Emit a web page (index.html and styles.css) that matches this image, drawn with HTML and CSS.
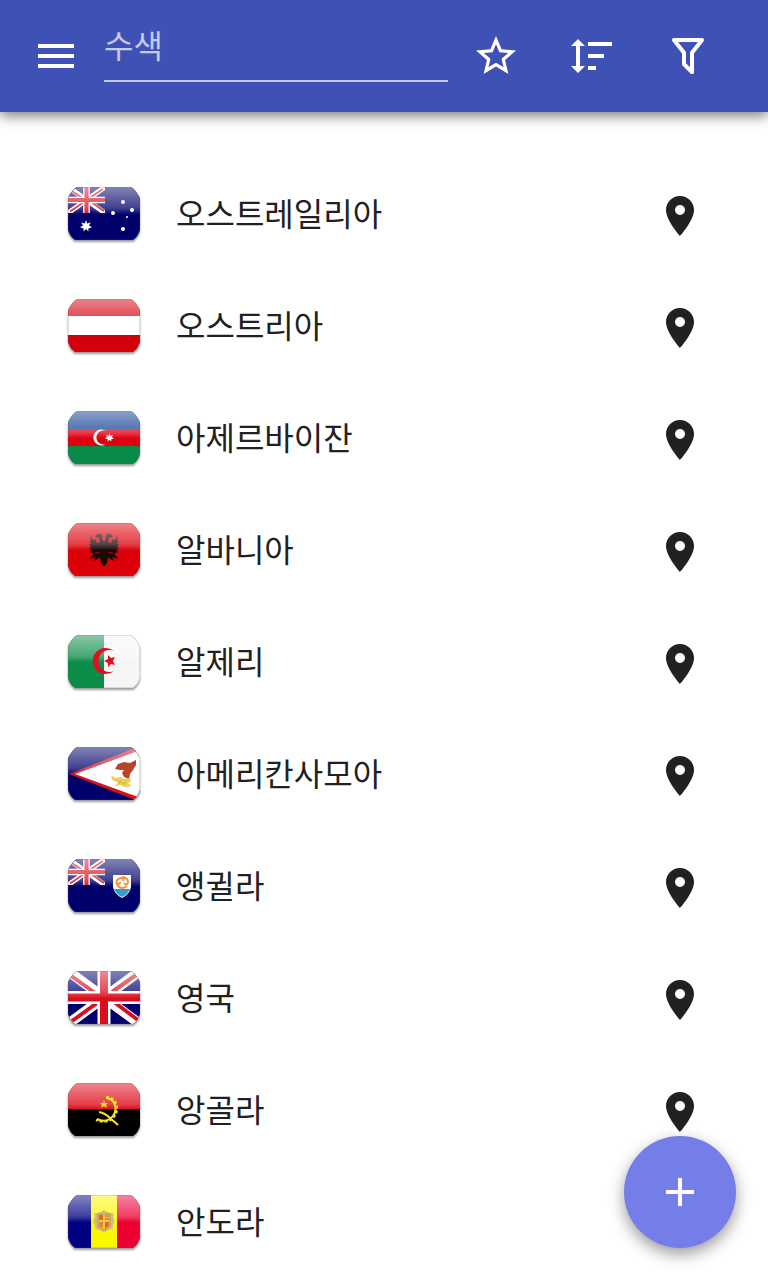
FILE: index.html
```html
<!DOCTYPE html>
<html lang="ko">
<head>
    <meta charset="UTF-8">
    <meta name="viewport" content="width=device-width, initial-scale=1.0">
    <title>국가</title>
    <link rel="stylesheet" href="styles.css">
</head>
<body>
    <!-- shared shapes -->
    <svg class="defs" aria-hidden="true">
        <defs>
            <clipPath id="flag-shape">
                <path d="M9 0H63Q68 3 72 11V43Q70 50 65 53H7Q2 50 0 43V11Q4 3 9 0Z"/>
            </clipPath>
            <linearGradient id="gloss" x1="0" y1="0" x2="0" y2="1">
                <stop offset="0" stop-color="#fff" stop-opacity=".52"/>
                <stop offset=".4" stop-color="#fff" stop-opacity=".25"/>
                <stop offset=".52" stop-color="#fff" stop-opacity="0"/>
            </linearGradient>
            <symbol id="shine" viewBox="0 0 72 53">
                <rect width="72" height="53" fill="url(#gloss)"/>
                <path d="M0 43V11Q4 3 9 0H63Q68 3 72 11V43Q70 50 65 53H7Q2 50 0 43Z" fill="none" stroke="#555" stroke-opacity=".35"/>
            </symbol>
            <symbol id="jack" viewBox="0 0 72 53" preserveAspectRatio="none">
                <rect width="72" height="53" fill="#00006e"/>
                <path d="M0 0L72 53M72 0L0 53" stroke="#fff" stroke-width="10"/>
                <path d="M2 4L27 22M68 4L44 21M4 50L29 32M70 49L46 31" stroke="#d80f1e" stroke-width="4"/>
                <path d="M36 0V53M0 26.5H72" stroke="#fff" stroke-width="13"/>
                <path d="M36 0V53M0 26.5H72" stroke="#d80f1e" stroke-width="8"/>
            </symbol>
            <symbol id="star7" viewBox="-10 -10 20 20">
                <path d="M0-10L2-4 8-6 5-1 10 2 4 4 4 9 0 5-4 9-4 4-10 2-5-1-8-6-2-4Z" fill="#fff"/>
            </symbol>
            <symbol id="pin" viewBox="0 0 24 24">
                <path d="M12 2C8.13 2 5 5.13 5 9c0 5.25 7 13 7 13s7-7.75 7-13c0-3.87-3.13-7-7-7zm0 9.5a2.5 2.5 0 0 1 0-5 2.5 2.5 0 0 1 0 5z"/>
            </symbol>
        </defs>
    </svg>

    <header class="toolbar">
        <button class="tool" type="button" aria-label="메뉴">
            <svg class="icon" viewBox="0 0 24 24"><path d="M3 18h18v-2H3v2zm0-5h18v-2H3v2zm0-7v2h18V6H3z"/></svg>
        </button>
        <input class="search" type="text" placeholder="수색" aria-label="수색">
        <button class="tool" type="button" aria-label="즐겨찾기">
            <svg class="icon" viewBox="0 0 24 24"><path d="M22 9.24l-7.19-.62L12 2 9.19 8.63 2 9.24l5.46 4.73L5.82 21 12 17.27 18.18 21l-1.63-7.03L22 9.24zM12 15.4l-3.76 2.27 1-4.28-3.32-2.88 4.38-.38L12 6.1l1.71 4.04 4.38.38-3.32 2.88 1 4.28L12 15.4z"/></svg>
        </button>
        <button class="tool" type="button" aria-label="정렬">
            <svg class="icon" viewBox="0 0 24 24"><path d="M10 13V11H18V13H10M10 19V17H14V19H10M10 7V5H22V7H10M6 17H8.5L5 20.5L1.5 17H4V7H1.5L5 3.5L8.5 7H6V17Z"/></svg>
        </button>
        <button class="tool" type="button" aria-label="필터">
            <svg class="icon" viewBox="0 0 24 24"><path d="M15 20.5Q15 21 14 21H13.5L9 16.5V10.75L4.21 4.62C3.87 4.19 3.95 3.56 4.38 3.22C4.57 3.08 4.78 3 5 3H19C19.22 3 19.43 3.08 19.62 3.22C20.05 3.56 20.13 4.19 19.79 4.62L15 10.75V20.5M7.04 5L11 10.06V15.58L13 17.58V10.05L16.96 5H7.04Z"/></svg>
        </button>
    </header>

    <main>
        <ul class="countries">
            <li class="country">
                <svg class="flag" viewBox="-4 -11 80 80" aria-hidden="true">
                    <g clip-path="url(#flag-shape)">
                        <rect width="72" height="53" fill="#00006a"/>
                        <use href="#jack" width="37" height="26"/>
                        <use href="#star7" x="12" y="33" width="12" height="12"/>
                        <use href="#shine" width="72" height="53"/>
                        <g fill="#fff">
                            <circle cx="55" cy="15" r="2"/>
                            <circle cx="64" cy="23" r="2"/>
                            <circle cx="45" cy="26" r="2"/>
                            <circle cx="59" cy="30" r="1"/>
                            <circle cx="55" cy="42" r="2"/>
                        </g>
                    </g>
                </svg>
                <span class="name">오스트레일리아</span>
                <button class="locate" type="button" aria-label="오스트레일리아 위치"><svg class="icon"><use href="#pin"/></svg></button>
            </li>
            <li class="country">
                <svg class="flag" viewBox="-4 -11 80 80" aria-hidden="true">
                    <g clip-path="url(#flag-shape)">
                        <rect width="72" height="53" fill="#d4000c"/>
                        <rect y="17" width="72" height="19" fill="#fff"/>
                        <use href="#shine" width="72" height="53"/>
                    </g>
                </svg>
                <span class="name">오스트리아</span>
                <button class="locate" type="button" aria-label="오스트리아 위치"><svg class="icon"><use href="#pin"/></svg></button>
            </li>
            <li class="country">
                <svg class="flag" viewBox="-4 -11 80 80" aria-hidden="true">
                    <g clip-path="url(#flag-shape)">
                        <rect width="72" height="18" fill="#103c94"/>
                        <rect y="18" width="72" height="17" fill="#e00010"/>
                        <rect y="35" width="72" height="18" fill="#0a8a48"/>
                        <use href="#shine" width="72" height="53"/>
                        <path d="M38 20A8 8 0 1 0 38 33A7 7 0 1 1 38 20Z" fill="#fff"/>
                        <use href="#star7" x="37" y="22" width="9" height="9"/>
                    </g>
                </svg>
                <span class="name">아제르바이잔</span>
                <button class="locate" type="button" aria-label="아제르바이잔 위치"><svg class="icon"><use href="#pin"/></svg></button>
            </li>
            <li class="country">
                <svg class="flag" viewBox="-4 -11 80 80" aria-hidden="true">
                    <g clip-path="url(#flag-shape)">
                        <rect width="72" height="53" fill="#dc0009"/>
                        <path d="M36 19L34 16 35 14 32 10 28 12 27 14 31 15 32 19 29 20 27 16 25 17 22 11 23 18 21 17 23 21 21 21 23 24 21 25 24 28 22 29 26 31 23 33 22 36 28 34 25 38 30 36 32 34 33 40 36 44 39 40 40 34 42 36 47 38 44 34 50 36 49 33 46 31 50 29 48 28 51 25 49 24 51 21 49 21 51 17 49 18 50 11 47 17 45 16 43 20 40 19 41 15 45 14 44 12 40 10 37 14 38 16Z" fill="#1a0808"/>
                        <path d="M27 30L32 29M45 30L40 29" stroke="#b00c10" fill="none"/>
                        <use href="#shine" width="72" height="53"/>
                    </g>
                </svg>
                <span class="name">알바니아</span>
                <button class="locate" type="button" aria-label="알바니아 위치"><svg class="icon"><use href="#pin"/></svg></button>
            </li>
            <li class="country">
                <svg class="flag" viewBox="-4 -11 80 80" aria-hidden="true">
                    <g clip-path="url(#flag-shape)">
                        <rect width="36" height="53" fill="#0b8c48"/>
                        <rect x="36" width="36" height="53" fill="#f6f6f6"/>
                        <use href="#shine" width="72" height="53"/>
                        <path d="M46 16A13 13 0 1 0 46 36A11 11 0 1 1 46 16Z" fill="#e01020"/>
                        <path d="M36 26L40 24 40 20 43 23 47 22 45 26 47 30 43 29 40 32 40 28Z" fill="#e01020"/>
                    </g>
                </svg>
                <span class="name">알제리</span>
                <button class="locate" type="button" aria-label="알제리 위치"><svg class="icon"><use href="#pin"/></svg></button>
            </li>
            <li class="country">
                <svg class="flag" viewBox="-4 -11 80 80" aria-hidden="true">
                    <g clip-path="url(#flag-shape)">
                        <rect width="72" height="53" fill="#00006a"/>
                        <path d="M1 27L72-1V55Z" fill="#d4101c"/>
                        <path d="M7 27L73 3V51Z" fill="#fff"/>
                        <use href="#shine" width="72" height="53"/>
                        <path d="M50 17L56 15 62 16 68 13 68 18 65 23 62 27 61 32 56 30 54 26 56 23 52 23 47 22Z" fill="#b8442a"/>
                        <path d="M43 28L47 31 53 30 56 32 62 31 63 34 60 36 64 39 57 40 52 38 47 39 50 35 44 33Z" fill="#ecd254"/>
                        <path d="M47 33L58 37M53 33L51 37M59 32L55 38" stroke="#d8b944" fill="none"/>
                    </g>
                </svg>
                <span class="name">아메리칸사모아</span>
                <button class="locate" type="button" aria-label="아메리칸사모아 위치"><svg class="icon"><use href="#pin"/></svg></button>
            </li>
            <li class="country">
                <svg class="flag" viewBox="-4 -11 80 80" aria-hidden="true">
                    <g clip-path="url(#flag-shape)">
                        <rect width="72" height="53" fill="#00006a"/>
                        <use href="#jack" width="37" height="26"/>
                        <use href="#shine" width="72" height="53"/>
                        <path d="M45 16H63V28Q62 35 54 39Q46 35 45 28Z" fill="#fff"/>
                        <path d="M46 30H62Q60 35 54 38Q48 35 46 30Z" fill="#2d9fd0"/>
                        <g fill="none" stroke="#f0933c" stroke-width="2">
                            <path d="M49 26Q47 20 53 19Q57 19 55 22"/>
                            <path d="M54 18Q61 19 60 24Q58 27 56 24"/>
                            <path d="M59 27Q54 31 50 27Q50 24 53 24"/>
                        </g>
                    </g>
                </svg>
                <span class="name">앵귈라</span>
                <button class="locate" type="button" aria-label="앵귈라 위치"><svg class="icon"><use href="#pin"/></svg></button>
            </li>
            <li class="country">
                <svg class="flag" viewBox="-4 -11 80 80" aria-hidden="true">
                    <g clip-path="url(#flag-shape)">
                        <use href="#jack" width="72" height="53"/>
                        <use href="#shine" width="72" height="53"/>
                    </g>
                </svg>
                <span class="name">영국</span>
                <button class="locate" type="button" aria-label="영국 위치"><svg class="icon"><use href="#pin"/></svg></button>
            </li>
            <li class="country">
                <svg class="flag" viewBox="-4 -11 80 80" aria-hidden="true">
                    <g clip-path="url(#flag-shape)">
                        <rect width="72" height="26" fill="#dc0010"/>
                        <use href="#shine" width="72" height="53"/>
                        <rect y="26" width="72" height="27"/>
                        <path d="M38 15C49 16 50 29 43 35Q37 40 29 36" fill="none" stroke="#f6e61e" stroke-width="2"/>
                        <path d="M38 14C51 14 52 30 44 36Q37 41 28 37" fill="none" stroke="#f6e61e" stroke-width="2" stroke-dasharray="3 2"/>
                        <path d="M31 29Q37 30 42 35L50 42" fill="none" stroke="#f6e61e" stroke-width="2"/>
                        <path d="M36 17L37 20 40 20 38 22 39 25 36 23 33 25 34 22 32 20 35 20Z" fill="#f6e61e"/>
                    </g>
                </svg>
                <span class="name">앙골라</span>
                <button class="locate" type="button" aria-label="앙골라 위치"><svg class="icon"><use href="#pin"/></svg></button>
            </li>
            <li class="country">
                <svg class="flag" viewBox="-4 -11 80 80" aria-hidden="true">
                    <g clip-path="url(#flag-shape)">
                        <rect width="23" height="53" fill="#000082"/>
                        <rect x="23" width="26" height="53" fill="#fcf800"/>
                        <rect x="49" width="23" height="53" fill="#ec0032"/>
                        <use href="#shine" width="72" height="53"/>
                        <path d="M26 18Q31 19 36 15Q41 19 46 18Q44 22 47 26Q44 29 45 34Q40 34 36 38Q32 34 27 34Q28 30 25 26Q28 22 26 18Z" fill="#d2bd86"/>
                        <path d="M30 19H42V31Q41 34 36 35Q31 34 30 31Z" fill="#f4c83c" stroke="#b8935c"/>
                        <path d="M31 20H35V25H31ZM37 27H41V31L37 34Z" fill="#dd6a28"/>
                        <path d="M37 21H41M37 24H41M32 27V32M34 27V33" stroke="#c8502a"/>
                    </g>
                </svg>
                <span class="name">안도라</span>
                <button class="locate" type="button" aria-label="안도라 위치"><svg class="icon"><use href="#pin"/></svg></button>
            </li>
        </ul>
    </main>

    <button class="fab" type="button" aria-label="추가">
        <svg class="icon" viewBox="0 0 24 24"><path d="M19 13h-6v6h-2v-6H5v-2h6V5h2v6h6v2z"/></svg>
    </button>
</body>
</html>
```
FILE: styles.css
```css
* {
    box-sizing: border-box;
}

body {
    margin: 0;
    background-color: #fff;
    color: #212121;
    font-family: "Noto Sans CJK KR", sans-serif;
    font-size: 32px;
    line-height: 48px;
}

button {
    display: flex;
    align-items: center;
    justify-content: center;
    padding: 0;
    border: none;
    background: none;
    color: inherit;
    cursor: pointer;
}

.defs {
    position: absolute;
    width: 0;
    height: 0;
}

.icon {
    display: block;
    width: 48px;
    height: 48px;
    fill: currentColor;
}

.toolbar {
    position: sticky;
    top: 0;
    z-index: 1;
    display: flex;
    align-items: center;
    height: 112px;
    padding: 0 32px 0 8px;
    background-color: #3f51b5;
    color: #fff;
    box-shadow: 0 4px 12px rgba(0, 0, 0, 0.5);
}

.tool {
    flex: none;
    width: 96px;
    height: 96px;
}

.search {
    flex: 1;
    align-self: flex-end;
    min-width: 0;
    height: 62px;
    margin: 0 0 30px;
    padding: 0 0 12px;
    border: none;
    border-bottom: 2px solid #c5cae9;
    border-radius: 0;
    outline: none;
    background: none;
    color: #fff;
    font: inherit;
}

.search::placeholder {
    color: #c5cae9;
    opacity: 1;
}

.countries {
    margin: 0;
    padding: 48px 0 0;
    list-style: none;
}

.country {
    display: flex;
    align-items: center;
    gap: 32px;
    height: 112px;
    padding: 0 64px;
}

.flag {
    flex: none;
    width: 80px;
    height: 80px;
    filter: drop-shadow(0 2px 1px rgba(0, 0, 0, 0.4));
}

.name {
    flex: 1;
    padding-bottom: 8px;
}

.fab {
    position: fixed;
    right: 32px;
    bottom: 32px;
    width: 112px;
    height: 112px;
    border-radius: 50%;
    background-color: #757de8;
    color: #fff;
    box-shadow: 0 6px 16px rgba(0, 0, 0, 0.4);
}
```
